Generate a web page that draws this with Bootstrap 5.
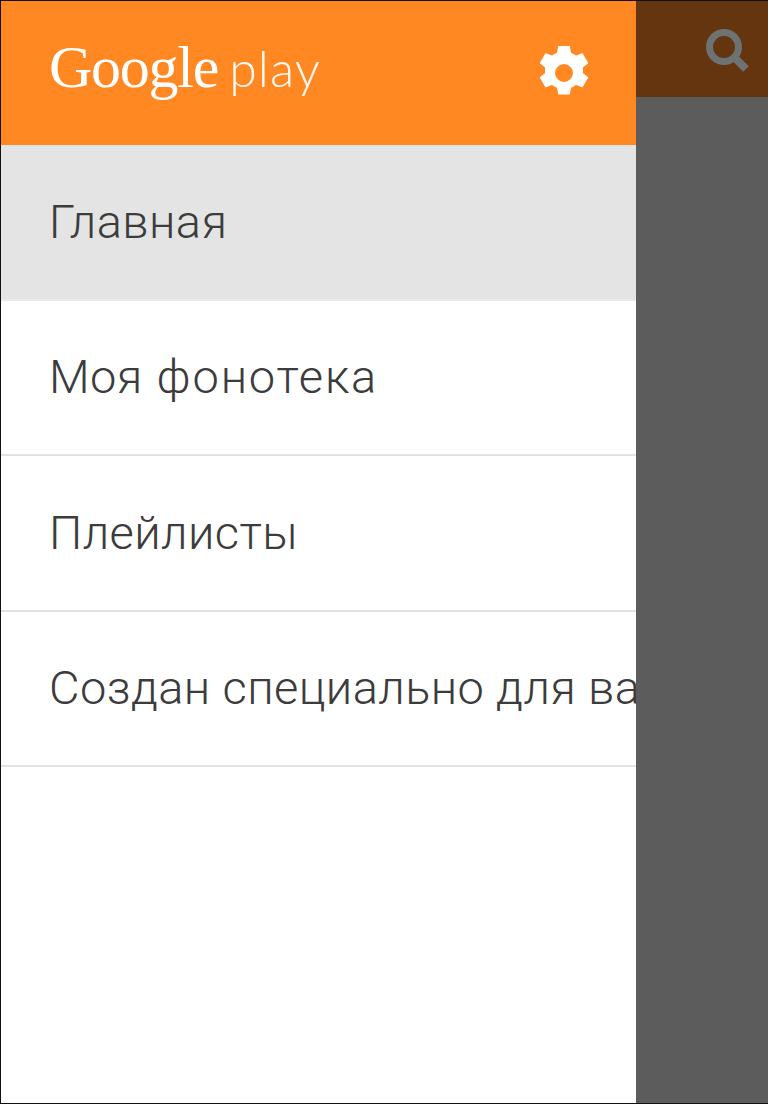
<!DOCTYPE html>
<html lang="ru">
<head>
<meta charset="utf-8">
<title>Google Play</title>
<link href="https://cdn.jsdelivr.net/npm/bootstrap@5.3.0/dist/css/bootstrap.min.css" rel="stylesheet">
<style>
html,body{margin:0;height:1104px;overflow:hidden;background:#000}
.gp-app{height:1104px;width:768px;padding:1px 0 1px 1px;background:#111}
.gp-drawer{width:635px;flex:none;background:#fff;overflow:hidden}
.gp-head{height:144px;background:#ff8822;padding:0 39px 0 48px}
.gp-logo{color:#fff;white-space:nowrap;line-height:1;display:flex;align-items:baseline;margin-top:-12px}
.gp-logo-g{font-family:"Liberation Serif",serif;font-size:60px;letter-spacing:-1.25px}
.gp-logo-p{font-family:"Lato","Roboto",sans-serif;font-weight:300;font-size:50px;letter-spacing:1.1px;margin-left:11px;opacity:.95}
.list-group.gp-menu{border-radius:0}
.gp-menu .gp-item{height:155.5px;padding:0 0 0 48px;display:flex;align-items:center;font-family:Roboto,sans-serif;font-weight:300;font-size:47px;letter-spacing:.4px;color:#3c3c3c;white-space:pre;border:0;border-bottom:2px solid #e2e2e2;border-radius:0;background:#fff;text-decoration:none}
.gp-menu .gp-item.gp-on{background:#e4e4e4;border-bottom-color:#e9e9e9}
.gp-stretch{letter-spacing:1.8px;margin-left:2px}
.gp-scrim{background:#5c5c5c}
.gp-bar{height:96px;background:#653510;padding:4px 17px 0 0}
</style>
</head>
<body>
<div class="gp-app d-flex">
  <nav class="gp-drawer d-flex flex-column">
    <header class="gp-head d-flex align-items-center justify-content-between">
      <div class="gp-logo"><span class="gp-logo-g">Google</span><span class="gp-logo-p">play</span></div>
      <svg width="66" height="66" viewBox="0 0 24 24" fill="#fff" aria-label="Настройки"><path fill-rule="evenodd" d="M10.100 2.400h3.800l.4 2.400a8 8 0 0 1 2 1.150l2.300-.9 1.900 3.300-1.900 1.500a8 8 0 0 1 0 2.300l1.900 1.500-1.900 3.300-2.300-.9a8 8 0 0 1-2 1.150l-.4 2.400h-3.800l-.4-2.400a8 8 0 0 1-2-1.150l-2.300.9-1.900-3.300 1.900-1.500a8 8 0 0 1 0-2.300l-1.900-1.500 1.900-3.300 2.300.9a8 8 0 0 1 2-1.150zM12 8.500a3.500 3.500 0 1 0 0 7 3.500 3.500 0 0 0 0-7z" stroke="#fff" stroke-width=".5" stroke-linejoin="round"/></svg>
    </header>
    <div class="list-group gp-menu">
      <a href="#" class="gp-item gp-on list-group-item">Главная</a>
      <a href="#" class="gp-item list-group-item"><span>Моя <span class="gp-stretch">фонотека</span></span></a>
      <a href="#" class="gp-item list-group-item">Плейлисты</a>
      <a href="#" class="gp-item list-group-item">Создан специально для вас</a>
    </div>
  </nav>
  <div class="gp-scrim flex-grow-1">
    <div class="gp-bar d-flex align-items-center justify-content-end">
      <svg width="46" height="46" viewBox="0 0 46 46" fill="none" stroke="#6d7272" aria-label="Поиск"><circle cx="19" cy="19" r="14.500" stroke-width="7"/><path d="M30 30 41 41" stroke-width="8"/></svg>
    </div>
  </div>
</div>
</body>
</html>
